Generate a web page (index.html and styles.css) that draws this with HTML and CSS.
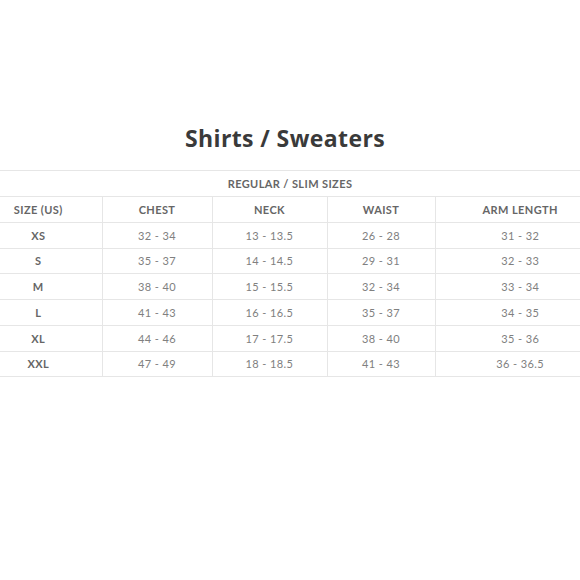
FILE: index.html
```html
<!DOCTYPE html>
<html>
<head>
<meta charset="utf-8">
<link rel="stylesheet" href="styles.css">
</head>
<body>
<main class="page">
  <h1 class="title">Shirts / Sweaters</h1>
  <table class="chart">
    <colgroup>
      <col class="c-size"><col class="c-chest"><col class="c-neck"><col class="c-waist"><col class="c-arm">
    </colgroup>
    <thead>
      <tr><th class="group" colspan="5">REGULAR / SLIM SIZES</th></tr>
      <tr class="head">
        <th>SIZE (US)</th><th>CHEST</th><th>NECK</th><th>WAIST</th><th>ARM LENGTH</th>
      </tr>
    </thead>
    <tbody>
      <tr><th>XS</th><td>32 - 34</td><td>13 - 13.5</td><td>26 - 28</td><td>31 - 32</td></tr>
      <tr><th>S</th><td>35 - 37</td><td>14 - 14.5</td><td>29 - 31</td><td>32 - 33</td></tr>
      <tr><th>M</th><td>38 - 40</td><td>15 - 15.5</td><td>32 - 34</td><td>33 - 34</td></tr>
      <tr><th>L</th><td>41 - 43</td><td>16 - 16.5</td><td>35 - 37</td><td>34 - 35</td></tr>
      <tr><th>XL</th><td>44 - 46</td><td>17 - 17.5</td><td>38 - 40</td><td>35 - 36</td></tr>
      <tr><th>XXL</th><td>47 - 49</td><td>18 - 18.5</td><td>41 - 43</td><td>36 - 36.5</td></tr>
    </tbody>
  </table>
</main>
</body>
</html>
```
FILE: styles.css
```css
html, body {
  margin: 0;
  padding: 0;
  background: #ffffff;
  overflow: hidden;
}
.page {
  width: 580px;
  height: 580px;
  padding-top: 123px;
  box-sizing: border-box;
  overflow: hidden;
}
.title {
  margin: 0 0 17px 0;
  text-align: center;
  font-family: "Open Sans", "DejaVu Sans", sans-serif;
  font-weight: 700;
  font-size: 23px;
  letter-spacing: 0.4px;
  line-height: 30px;
  color: #3a3a3a;
  padding-right: 10px;
}
.chart {
  margin-left: -25px;
  width: 630px;
  border-collapse: collapse;
  table-layout: fixed;
  font-family: "Lato", "Open Sans", sans-serif;
  font-size: 11px;
}
.c-size { width: 127px; }
.c-chest { width: 110px; }
.c-neck { width: 115px; }
.c-waist { width: 108px; }
.c-arm { width: 170px; }
.chart th, .chart td {
  height: 24.75px;
  padding: 0;
  text-align: center;
  border-top: 1px solid #e6e6e6;
  border-bottom: 1px solid #e6e6e6;
}
.chart .group { height: 25px; }
.chart th {
  font-weight: 700;
  color: #666666;
  letter-spacing: 0.4px;
}
.chart td {
  font-weight: 400;
  color: #808080;
  letter-spacing: 0.4px;
}
.chart .head th, .chart tbody th, .chart tbody td {
  border-right: 1px solid #e6e6e6;
}
.chart .head th:last-child, .chart tbody td:last-child { border-right: none; }
```
